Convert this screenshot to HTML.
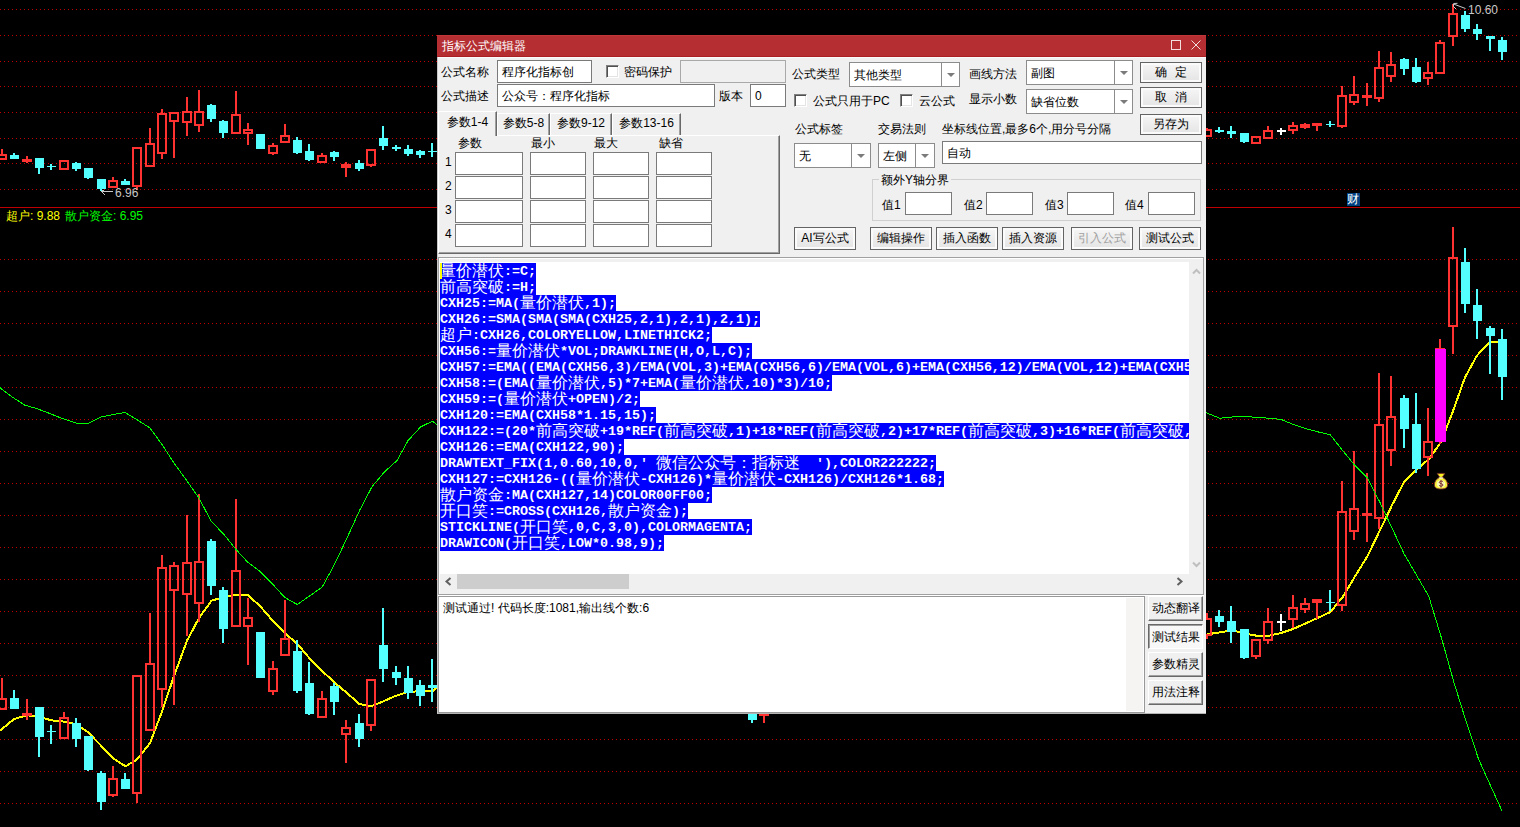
<!DOCTYPE html>
<html lang="zh"><head><meta charset="utf-8"><title>指标公式编辑器</title>
<style>
*{box-sizing:border-box;margin:0;padding:0}
html,body{width:1520px;height:827px;overflow:hidden;background:#000}
body{position:relative;font-family:"Liberation Sans",sans-serif;font-size:12px;line-height:12px;color:#000}
.a{position:absolute;white-space:nowrap}
.k{display:inline-block;width:12px;text-align:center}
#chart{position:absolute;left:0;top:0}
.ct{position:absolute;white-space:nowrap;font-size:12px;line-height:12px}
#dlg{position:absolute;left:437px;top:35px;width:769px;height:679px;background:#f0f0f0;border-left:1px solid #c8c8c8;border-bottom:1px solid #b4b4b4}
#ttl{position:absolute;left:437px;top:35px;width:769px;height:22px;background:#b42e32;border-top:1px solid #c1363a;border-bottom:1px solid #a92024}
.in{position:absolute;background:#fff;border:1px solid #7a7a7a;height:23px;padding:5px 0 0 4px;white-space:nowrap;overflow:hidden}
.dis{background:#f0f0f0;border-color:#a9a9a9}
.cb{position:absolute;width:13px;height:13px;background:#fff;border:1px solid #fff;border-top-color:#808080;border-left-color:#808080;box-shadow:inset 1px 1px 0 #505050,inset -1px -1px 0 #e4e4e4}
.cmb{position:absolute;background:#fff;border:1px solid #8c8c8c;height:25px;padding:6px 0 0 4px;white-space:nowrap;overflow:hidden}
.cmb i{position:absolute;right:0;top:0;bottom:0;width:18px;border-left:1px solid #8c8c8c;background:#fff}
.cmb i:after{content:"";position:absolute;left:5px;top:10px;border:4px solid transparent;border-top:4px solid #7b7b7b;border-bottom:0}
.btn{position:absolute;border:1px solid #646464;background:linear-gradient(#f6f6f6,#e4e4e4);box-shadow:inset 0 0 0 2px #fbfbfb;text-align:center;white-space:nowrap}
.btn.d{color:#a0a0a0}
.sb{position:absolute;border:1px solid #fff;border-right-color:#696969;border-bottom-color:#696969;box-shadow:inset -1px -1px 0 #a0a0a0;background:#f0f0f0;text-align:center;width:55px;height:25px;padding-top:5px;white-space:nowrap}
.sb.p{border-color:#696969 #fff #fff #696969;box-shadow:inset 1px 1px 0 #a0a0a0;background:#f8f8f8;padding-top:6px;padding-left:1px}
.tab{position:absolute;height:22px;border-top:1px solid #fff;border-left:1px solid #fff;border-right:1px solid #696969;box-shadow:inset -1px 0 0 #a0a0a0;background:#f0f0f0;text-align:center;padding-top:3px;white-space:nowrap}
#pane{position:absolute;left:438px;top:135px;width:342px;height:119px;border:1px solid #fff;border-right-color:#696969;border-bottom-color:#696969;box-shadow:inset -1px -1px 0 #a0a0a0}
#code{position:absolute;left:440px;top:263px;width:749px;height:311px;background:#fff;overflow:hidden;font-family:"Liberation Mono",monospace;font-weight:bold;font-size:13.33px;line-height:16px;color:#fff;white-space:pre}
#code div{height:16px;position:relative}
#code span.s{display:inline-block;background:#0000ff;height:16px;vertical-align:top;overflow:hidden}
#code span.t{display:inline-block;height:16px;vertical-align:top;overflow:hidden;position:relative;top:1px}
#code b{display:inline-block;width:16px;height:16px;overflow:hidden;vertical-align:top;text-align:center;font:normal 16px/16px "Liberation Sans",sans-serif}
</style></head>
<body>
<svg id="chart" width="1520" height="827" viewBox="0 0 1520 827" shape-rendering="crispEdges">
<rect width="1520" height="827" fill="#000"/>
<g stroke="#c00000" stroke-width="1" stroke-dasharray="1 3" fill="none"><path d="M0 9.5H1520"/><path d="M0 35.5H1520"/><path d="M0 61.5H1520"/><path d="M0 86.5H1520"/><path d="M0 112.5H1520"/><path d="M0 138.5H1520"/><path d="M0 163.5H1520"/><path d="M0 189.5H1520"/><path d="M0 259.5H1520"/><path d="M0 291.5H1520"/><path d="M0 323.5H1520"/><path d="M0 355.5H1520"/><path d="M0 387.5H1520"/><path d="M0 419.5H1520"/><path d="M0 451.5H1520"/><path d="M0 483.5H1520"/><path d="M0 515.5H1520"/><path d="M0 547.5H1520"/><path d="M0 579.5H1520"/><path d="M0 611.5H1520"/><path d="M0 643.5H1520"/><path d="M0 675.5H1520"/><path d="M0 707.5H1520"/><path d="M0 739.5H1520"/><path d="M0 771.5H1520"/><path d="M0 803.5H1520"/></g>
<rect x="0" y="207" width="1520" height="1" fill="#c00000"/>
<polyline fill="none" stroke="#ffff00" stroke-width="2" points="-10,738 2,729 14,719 27,715.3 39,716.6 51,720.3 64,721.6 76,724.1 88,732.2 101,745.6 113,758.3 125.5,766.3 137,759.5 150,743.1 162,711.5 174,676.1 187,640.7 199,618 211.5,600.75 223.5,597 236,594.5 248,595.25 260,606 273,621 285.4,633.7 297.5,644 310.5,659.5 322.5,671.3 335,683 347,693 359.2,703.9 371,706.2 383.2,701.4 395.8,695.8 408,691.8 420,691.3 432.2,691.3 444.5,682"/>
<polyline fill="none" stroke="#ffff00" stroke-width="2" points="1195,640 1207.4,634.3 1219.7,632.4 1232,630.2 1244.3,633.5 1256.6,635.7 1268.9,635.7 1281.2,633 1293.5,628.8 1305.8,623.3 1318.1,617.8 1330.4,612 1342.7,597 1355,576.4 1367.3,556.5 1379.6,531 1391.9,505.4 1404.2,481.7 1416.5,469.3 1428.8,459.3 1441.1,441.9 1453.3,410.3 1464.8,377.9 1477,355.5 1490.2,341.8 1502.6,341.8"/>
<rect x="1" y="149" width="2" height="5" fill="#ff3232"/><path fill="#ff3232" fill-rule="evenodd" d="M-3 154h10v6h-10zM-1 156h6v2h-6z"/>
<rect x="13" y="153" width="2" height="6" fill="#54ffff"/><rect x="10" y="155" width="9" height="4" fill="#54ffff"/>
<rect x="26" y="156" width="2" height="3" fill="#ff3232"/><rect x="26" y="162" width="2" height="1" fill="#ff3232"/><rect x="22" y="159" width="10" height="3" fill="#ff3232"/>
<rect x="38" y="158" width="2" height="16" fill="#54ffff"/><rect x="35" y="158" width="9" height="10" fill="#54ffff"/>
<rect x="50" y="164" width="2" height="6" fill="#54ffff"/><rect x="47" y="166" width="9" height="1" fill="#54ffff"/>
<path fill="#ff3232" fill-rule="evenodd" d="M59 160h10v10h-10zM61 162h6v6h-6z"/>
<rect x="75" y="162" width="2" height="9" fill="#54ffff"/><rect x="72" y="163" width="9" height="6" fill="#54ffff"/>
<rect x="87" y="168" width="2" height="11" fill="#54ffff"/><rect x="84" y="168" width="9" height="10" fill="#54ffff"/>
<rect x="100" y="179" width="2" height="12" fill="#54ffff"/><rect x="97" y="179" width="9" height="10" fill="#54ffff"/>
<rect x="112" y="177" width="2" height="3" fill="#ff3232"/><path fill="#ff3232" fill-rule="evenodd" d="M108 180h10v8h-10zM110 182h6v4h-6z"/>
<rect x="124" y="179" width="2" height="6" fill="#54ffff"/><rect x="121" y="181" width="9" height="4" fill="#54ffff"/>
<rect x="136" y="187" width="2" height="3" fill="#ff3232"/><path fill="#ff3232" fill-rule="evenodd" d="M132 147h10v40h-10zM134 149h6v36h-6z"/>
<rect x="149" y="128" width="2" height="15" fill="#ff3232"/><path fill="#ff3232" fill-rule="evenodd" d="M145 143h10v24h-10zM147 145h6v20h-6z"/>
<rect x="161" y="109" width="2" height="4" fill="#ff3232"/><rect x="161" y="154" width="2" height="5" fill="#ff3232"/><path fill="#ff3232" fill-rule="evenodd" d="M157 113h10v41h-10zM159 115h6v37h-6z"/>
<rect x="173" y="122" width="2" height="36" fill="#ff3232"/><path fill="#ff3232" fill-rule="evenodd" d="M169 112h10v10h-10zM171 114h6v6h-6z"/>
<rect x="186" y="97" width="2" height="14" fill="#ff3232"/><rect x="186" y="123" width="2" height="13" fill="#ff3232"/><path fill="#ff3232" fill-rule="evenodd" d="M182 111h10v12h-10zM184 113h6v8h-6z"/>
<rect x="198" y="90" width="2" height="21" fill="#ff3232"/><rect x="198" y="126" width="2" height="6" fill="#ff3232"/><path fill="#ff3232" fill-rule="evenodd" d="M194 111h10v15h-10zM196 113h6v11h-6z"/>
<rect x="210" y="104" width="2" height="18" fill="#54ffff"/><rect x="207" y="105" width="9" height="14" fill="#54ffff"/>
<rect x="222" y="120" width="2" height="18" fill="#54ffff"/><rect x="219" y="121" width="9" height="12" fill="#54ffff"/>
<rect x="235" y="91" width="2" height="23" fill="#ff3232"/><path fill="#ff3232" fill-rule="evenodd" d="M231 114h10v20h-10zM233 116h6v16h-6z"/>
<rect x="247" y="123" width="2" height="6" fill="#ff3232"/><rect x="247" y="134" width="2" height="11" fill="#ff3232"/><path fill="#ff3232" fill-rule="evenodd" d="M243 129h10v5h-10zM245 131h6v1h-6z"/>
<rect x="259" y="134" width="2" height="15" fill="#54ffff"/><rect x="256" y="134" width="9" height="15" fill="#54ffff"/>
<rect x="272" y="143" width="2" height="2" fill="#ff3232"/><rect x="272" y="154" width="2" height="1" fill="#ff3232"/><path fill="#ff3232" fill-rule="evenodd" d="M268 145h10v9h-10zM270 147h6v5h-6z"/>
<rect x="284" y="124" width="2" height="11" fill="#ff3232"/><path fill="#ff3232" fill-rule="evenodd" d="M280 135h10v8h-10zM282 137h6v4h-6z"/>
<rect x="296" y="137" width="2" height="17" fill="#54ffff"/><rect x="293" y="140" width="9" height="13" fill="#54ffff"/>
<rect x="308" y="144" width="2" height="17" fill="#54ffff"/><rect x="305" y="151" width="9" height="9" fill="#54ffff"/>
<rect x="321" y="153" width="2" height="2" fill="#ff3232"/><path fill="#ff3232" fill-rule="evenodd" d="M317 155h10v8h-10zM319 157h6v4h-6z"/>
<rect x="333" y="151" width="2" height="10" fill="#54ffff"/><rect x="330" y="152" width="9" height="5" fill="#54ffff"/>
<rect x="345" y="162" width="2" height="2" fill="#ff3232"/><rect x="345" y="168" width="2" height="9" fill="#ff3232"/><rect x="341" y="164" width="10" height="4" fill="#ff3232"/>
<rect x="358" y="160" width="2" height="11" fill="#54ffff"/><rect x="355" y="163" width="9" height="6" fill="#54ffff"/>
<rect x="370" y="166" width="2" height="1" fill="#ff3232"/><path fill="#ff3232" fill-rule="evenodd" d="M366 149h10v17h-10zM368 151h6v13h-6z"/>
<rect x="382" y="126" width="2" height="24" fill="#54ffff"/><rect x="379" y="138" width="9" height="8" fill="#54ffff"/>
<rect x="395" y="145" width="2" height="6" fill="#54ffff"/><rect x="392" y="147" width="9" height="2" fill="#54ffff"/>
<rect x="407" y="145" width="2" height="11" fill="#54ffff"/><rect x="404" y="149" width="9" height="5" fill="#54ffff"/>
<rect x="419" y="150" width="2" height="8" fill="#54ffff"/><rect x="416" y="151" width="9" height="4" fill="#54ffff"/>
<rect x="431" y="143" width="2" height="14" fill="#54ffff"/><rect x="428" y="151" width="9" height="1" fill="#54ffff"/>
<rect x="1206" y="128" width="2" height="1" fill="#ff3232"/><path fill="#ff3232" fill-rule="evenodd" d="M1202 129h10v8h-10zM1204 131h6v4h-6z"/>
<rect x="1218" y="127" width="2" height="6" fill="#54ffff"/><rect x="1215" y="130" width="9" height="2" fill="#54ffff"/>
<rect x="1230" y="126" width="2" height="12" fill="#54ffff"/><rect x="1227" y="131" width="9" height="3" fill="#54ffff"/>
<rect x="1243" y="133" width="2" height="10" fill="#54ffff"/><rect x="1240" y="133" width="9" height="9" fill="#54ffff"/>
<path fill="#ff3232" fill-rule="evenodd" d="M1251 136h10v8h-10zM1253 138h6v4h-6z"/>
<rect x="1267" y="126" width="2" height="4" fill="#ff3232"/><path fill="#ff3232" fill-rule="evenodd" d="M1263 130h10v9h-10zM1265 132h6v5h-6z"/>
<rect x="1280" y="128" width="2" height="7" fill="#ffffff"/><rect x="1277" y="130" width="9" height="2" fill="#ffffff"/>
<rect x="1292" y="122" width="2" height="3" fill="#ff3232"/><rect x="1292" y="131" width="2" height="3" fill="#ff3232"/><path fill="#ff3232" fill-rule="evenodd" d="M1288 125h10v6h-10zM1290 127h6v2h-6z"/>
<rect x="1304" y="123" width="2" height="1" fill="#ff3232"/><rect x="1304" y="128" width="2" height="1" fill="#ff3232"/><rect x="1300" y="124" width="10" height="4" fill="#ff3232"/>
<rect x="1316" y="126" width="2" height="5" fill="#ff3232"/><rect x="1312" y="123" width="10" height="3" fill="#ff3232"/>
<rect x="1329" y="121" width="2" height="6" fill="#54ffff"/><rect x="1326" y="124" width="9" height="1" fill="#54ffff"/>
<rect x="1341" y="86" width="2" height="9" fill="#ff3232"/><rect x="1341" y="127" width="2" height="1" fill="#ff3232"/><path fill="#ff3232" fill-rule="evenodd" d="M1337 95h10v32h-10zM1339 97h6v28h-6z"/>
<rect x="1353" y="76" width="2" height="18" fill="#ff3232"/><rect x="1353" y="103" width="2" height="2" fill="#ff3232"/><path fill="#ff3232" fill-rule="evenodd" d="M1349 94h10v9h-10zM1351 96h6v5h-6z"/>
<rect x="1366" y="83" width="2" height="12" fill="#ff3232"/><rect x="1366" y="98" width="2" height="8" fill="#ff3232"/><rect x="1362" y="95" width="10" height="3" fill="#ff3232"/>
<rect x="1378" y="51" width="2" height="16" fill="#ff3232"/><rect x="1378" y="99" width="2" height="3" fill="#ff3232"/><path fill="#ff3232" fill-rule="evenodd" d="M1374 67h10v32h-10zM1376 69h6v28h-6z"/>
<rect x="1390" y="52" width="2" height="12" fill="#ff3232"/><rect x="1390" y="77" width="2" height="5" fill="#ff3232"/><path fill="#ff3232" fill-rule="evenodd" d="M1386 64h10v13h-10zM1388 66h6v9h-6z"/>
<rect x="1403" y="58" width="2" height="17" fill="#54ffff"/><rect x="1400" y="59" width="9" height="10" fill="#54ffff"/>
<rect x="1415" y="58" width="2" height="25" fill="#54ffff"/><rect x="1412" y="67" width="9" height="15" fill="#54ffff"/>
<rect x="1427" y="62" width="2" height="10" fill="#ff3232"/><rect x="1427" y="79" width="2" height="6" fill="#ff3232"/><path fill="#ff3232" fill-rule="evenodd" d="M1423 72h10v7h-10zM1425 74h6v3h-6z"/>
<rect x="1439" y="40" width="2" height="2" fill="#ff3232"/><path fill="#ff3232" fill-rule="evenodd" d="M1435 42h10v32h-10zM1437 44h6v28h-6z"/>
<rect x="1452" y="4" width="2" height="9" fill="#ff3232"/><rect x="1452" y="37" width="2" height="9" fill="#ff3232"/><path fill="#ff3232" fill-rule="evenodd" d="M1448 13h10v24h-10zM1450 15h6v20h-6z"/>
<rect x="1464" y="11" width="2" height="21" fill="#54ffff"/><rect x="1461" y="15" width="9" height="14" fill="#54ffff"/>
<rect x="1476" y="24" width="2" height="16" fill="#54ffff"/><rect x="1473" y="29" width="9" height="5" fill="#54ffff"/>
<rect x="1489" y="36" width="2" height="15" fill="#54ffff"/><rect x="1486" y="36" width="9" height="3" fill="#54ffff"/>
<rect x="1501" y="37" width="2" height="23" fill="#54ffff"/><rect x="1498" y="40" width="9" height="12" fill="#54ffff"/>
<rect x="1" y="678" width="2" height="20" fill="#ff3232"/><path fill="#ff3232" fill-rule="evenodd" d="M-3 698h10v12h-10zM-1 700h6v8h-6z"/>
<rect x="13" y="690" width="2" height="19" fill="#54ffff"/><rect x="10" y="698" width="9" height="11" fill="#54ffff"/>
<rect x="26" y="699" width="2" height="14" fill="#ff3232"/><rect x="26" y="716" width="2" height="4" fill="#ff3232"/><rect x="22" y="713" width="10" height="3" fill="#ff3232"/>
<rect x="38" y="707" width="2" height="50" fill="#54ffff"/><rect x="35" y="707" width="9" height="30" fill="#54ffff"/>
<rect x="50" y="725" width="2" height="19" fill="#54ffff"/><rect x="47" y="731" width="9" height="1" fill="#54ffff"/>
<rect x="63" y="712" width="2" height="5" fill="#ff3232"/><path fill="#ff3232" fill-rule="evenodd" d="M59 717h10v22h-10zM61 719h6v18h-6z"/>
<rect x="75" y="718" width="2" height="29" fill="#54ffff"/><rect x="72" y="723" width="9" height="16" fill="#54ffff"/>
<rect x="87" y="736" width="2" height="35" fill="#54ffff"/><rect x="84" y="736" width="9" height="34" fill="#54ffff"/>
<rect x="100" y="771" width="2" height="39" fill="#54ffff"/><rect x="97" y="773" width="9" height="29" fill="#54ffff"/>
<rect x="112" y="766" width="2" height="12" fill="#ff3232"/><rect x="112" y="796" width="2" height="1" fill="#ff3232"/><path fill="#ff3232" fill-rule="evenodd" d="M108 778h10v18h-10zM110 780h6v14h-6z"/>
<rect x="124" y="773" width="2" height="16" fill="#54ffff"/><rect x="121" y="779" width="9" height="10" fill="#54ffff"/>
<rect x="136" y="794" width="2" height="9" fill="#ff3232"/><path fill="#ff3232" fill-rule="evenodd" d="M132 675h10v119h-10zM134 677h6v115h-6z"/>
<rect x="149" y="613" width="2" height="50" fill="#ff3232"/><path fill="#ff3232" fill-rule="evenodd" d="M145 663h10v68h-10zM147 665h6v64h-6z"/>
<rect x="161" y="555" width="2" height="12" fill="#ff3232"/><rect x="161" y="690" width="2" height="17" fill="#ff3232"/><path fill="#ff3232" fill-rule="evenodd" d="M157 567h10v123h-10zM159 569h6v119h-6z"/>
<rect x="173" y="562" width="2" height="3" fill="#ff3232"/><rect x="173" y="591" width="2" height="114" fill="#ff3232"/><path fill="#ff3232" fill-rule="evenodd" d="M169 565h10v26h-10zM171 567h6v22h-6z"/>
<rect x="186" y="515" width="2" height="47" fill="#ff3232"/><rect x="186" y="595" width="2" height="41" fill="#ff3232"/><path fill="#ff3232" fill-rule="evenodd" d="M182 562h10v33h-10zM184 564h6v29h-6z"/>
<rect x="198" y="494" width="2" height="67" fill="#ff3232"/><rect x="198" y="604" width="2" height="18" fill="#ff3232"/><path fill="#ff3232" fill-rule="evenodd" d="M194 561h10v43h-10zM196 563h6v39h-6z"/>
<rect x="210" y="539" width="2" height="56" fill="#54ffff"/><rect x="207" y="541" width="9" height="45" fill="#54ffff"/>
<rect x="222" y="587" width="2" height="56" fill="#54ffff"/><rect x="219" y="590" width="9" height="39" fill="#54ffff"/>
<rect x="235" y="499" width="2" height="71" fill="#ff3232"/><path fill="#ff3232" fill-rule="evenodd" d="M231 570h10v57h-10zM233 572h6v53h-6z"/>
<rect x="247" y="598" width="2" height="19" fill="#ff3232"/><rect x="247" y="627" width="2" height="38" fill="#ff3232"/><path fill="#ff3232" fill-rule="evenodd" d="M243 617h10v10h-10zM245 619h6v6h-6z"/>
<rect x="259" y="632" width="2" height="46" fill="#54ffff"/><rect x="256" y="632" width="9" height="46" fill="#54ffff"/>
<rect x="272" y="661" width="2" height="7" fill="#ff3232"/><rect x="272" y="692" width="2" height="3" fill="#ff3232"/><path fill="#ff3232" fill-rule="evenodd" d="M268 668h10v24h-10zM270 670h6v20h-6z"/>
<rect x="284" y="600" width="2" height="38" fill="#ff3232"/><path fill="#ff3232" fill-rule="evenodd" d="M280 638h10v18h-10zM282 640h6v14h-6z"/>
<rect x="296" y="640" width="2" height="53" fill="#54ffff"/><rect x="293" y="651" width="9" height="40" fill="#54ffff"/>
<rect x="308" y="662" width="2" height="53" fill="#54ffff"/><rect x="305" y="683" width="9" height="31" fill="#54ffff"/>
<rect x="321" y="691" width="2" height="7" fill="#ff3232"/><path fill="#ff3232" fill-rule="evenodd" d="M317 698h10v20h-10zM319 700h6v16h-6z"/>
<rect x="333" y="683" width="2" height="32" fill="#54ffff"/><rect x="330" y="686" width="9" height="16" fill="#54ffff"/>
<rect x="345" y="720" width="2" height="7" fill="#ff3232"/><rect x="345" y="735" width="2" height="28" fill="#ff3232"/><path fill="#ff3232" fill-rule="evenodd" d="M341 727h10v8h-10zM343 729h6v4h-6z"/>
<rect x="358" y="714" width="2" height="33" fill="#54ffff"/><rect x="355" y="723" width="9" height="16" fill="#54ffff"/>
<rect x="370" y="726" width="2" height="5" fill="#ff3232"/><path fill="#ff3232" fill-rule="evenodd" d="M366 679h10v47h-10zM368 681h6v43h-6z"/>
<rect x="382" y="608" width="2" height="74" fill="#54ffff"/><rect x="379" y="645" width="9" height="24" fill="#54ffff"/>
<rect x="395" y="666" width="2" height="19" fill="#54ffff"/><rect x="392" y="672" width="9" height="6" fill="#54ffff"/>
<rect x="407" y="666" width="2" height="33" fill="#54ffff"/><rect x="404" y="678" width="9" height="15" fill="#54ffff"/>
<rect x="419" y="680" width="2" height="26" fill="#54ffff"/><rect x="416" y="685" width="9" height="11" fill="#54ffff"/>
<rect x="431" y="659" width="2" height="43" fill="#54ffff"/><rect x="428" y="685" width="9" height="3" fill="#54ffff"/>
<rect x="751" y="690" width="2" height="33" fill="#54ffff"/><rect x="748" y="690" width="9" height="30" fill="#54ffff"/>
<rect x="763" y="716" width="2" height="7" fill="#ff3232"/><rect x="759" y="712" width="10" height="4" fill="#ff3232"/>
<rect x="1206" y="613" width="2" height="5" fill="#ff3232"/><rect x="1206" y="636" width="2" height="3" fill="#ff3232"/><path fill="#ff3232" fill-rule="evenodd" d="M1202 618h10v18h-10zM1204 620h6v14h-6z"/>
<rect x="1218" y="610" width="2" height="17" fill="#54ffff"/><rect x="1215" y="616" width="9" height="6" fill="#54ffff"/>
<rect x="1230" y="606" width="2" height="37" fill="#54ffff"/><rect x="1227" y="621" width="9" height="11" fill="#54ffff"/>
<rect x="1243" y="629" width="2" height="30" fill="#54ffff"/><rect x="1240" y="629" width="9" height="29" fill="#54ffff"/>
<rect x="1255" y="657" width="2" height="2" fill="#ff3232"/><path fill="#ff3232" fill-rule="evenodd" d="M1251 639h10v18h-10zM1253 641h6v14h-6z"/>
<rect x="1267" y="608" width="2" height="13" fill="#ff3232"/><rect x="1267" y="641" width="2" height="3" fill="#ff3232"/><path fill="#ff3232" fill-rule="evenodd" d="M1263 621h10v20h-10zM1265 623h6v16h-6z"/>
<rect x="1280" y="614" width="2" height="17" fill="#ffffff"/><rect x="1277" y="621" width="9" height="2" fill="#ffffff"/>
<rect x="1292" y="595" width="2" height="12" fill="#ff3232"/><rect x="1292" y="620" width="2" height="8" fill="#ff3232"/><path fill="#ff3232" fill-rule="evenodd" d="M1288 607h10v13h-10zM1290 609h6v9h-6z"/>
<rect x="1304" y="598" width="2" height="5" fill="#ff3232"/><rect x="1304" y="610" width="2" height="3" fill="#ff3232"/><path fill="#ff3232" fill-rule="evenodd" d="M1300 603h10v7h-10zM1302 605h6v3h-6z"/>
<rect x="1316" y="603" width="2" height="16" fill="#ff3232"/><rect x="1312" y="599" width="10" height="4" fill="#ff3232"/>
<rect x="1329" y="590" width="2" height="21" fill="#54ffff"/><rect x="1326" y="602" width="9" height="1" fill="#54ffff"/>
<rect x="1341" y="481" width="2" height="30" fill="#ff3232"/><rect x="1341" y="606" width="2" height="5" fill="#ff3232"/><path fill="#ff3232" fill-rule="evenodd" d="M1337 511h10v95h-10zM1339 513h6v91h-6z"/>
<rect x="1353" y="451" width="2" height="57" fill="#ff3232"/><rect x="1353" y="532" width="2" height="8" fill="#ff3232"/><path fill="#ff3232" fill-rule="evenodd" d="M1349 508h10v24h-10zM1351 510h6v20h-6z"/>
<rect x="1366" y="473" width="2" height="40" fill="#ff3232"/><rect x="1366" y="516" width="2" height="26" fill="#ff3232"/><rect x="1362" y="513" width="10" height="3" fill="#ff3232"/>
<rect x="1378" y="373" width="2" height="51" fill="#ff3232"/><rect x="1378" y="519" width="2" height="10" fill="#ff3232"/><path fill="#ff3232" fill-rule="evenodd" d="M1374 424h10v95h-10zM1376 426h6v91h-6z"/>
<rect x="1390" y="376" width="2" height="40" fill="#ff3232"/><rect x="1390" y="451" width="2" height="15" fill="#ff3232"/><path fill="#ff3232" fill-rule="evenodd" d="M1386 416h10v35h-10zM1388 418h6v31h-6z"/>
<rect x="1403" y="395" width="2" height="53" fill="#54ffff"/><rect x="1400" y="398" width="9" height="31" fill="#54ffff"/>
<rect x="1415" y="393" width="2" height="80" fill="#54ffff"/><rect x="1412" y="424" width="9" height="45" fill="#54ffff"/>
<rect x="1427" y="408" width="2" height="33" fill="#ff3232"/><rect x="1427" y="458" width="2" height="18" fill="#ff3232"/><path fill="#ff3232" fill-rule="evenodd" d="M1423 441h10v17h-10zM1425 443h6v13h-6z"/>
<rect x="1439" y="339" width="2" height="9" fill="#ff3232"/><rect x="1439" y="442" width="2" height="2" fill="#ff3232"/><path fill="#ff3232" fill-rule="evenodd" d="M1435 348h10v94h-10zM1437 350h6v90h-6z"/>
<rect x="1452" y="227" width="2" height="30" fill="#ff3232"/><rect x="1452" y="327" width="2" height="27" fill="#ff3232"/><path fill="#ff3232" fill-rule="evenodd" d="M1448 257h10v70h-10zM1450 259h6v66h-6z"/>
<rect x="1464" y="248" width="2" height="65" fill="#54ffff"/><rect x="1461" y="262" width="9" height="42" fill="#54ffff"/>
<rect x="1476" y="289" width="2" height="50" fill="#54ffff"/><rect x="1473" y="305" width="9" height="16" fill="#54ffff"/>
<rect x="1489" y="326" width="2" height="48" fill="#54ffff"/><rect x="1486" y="328" width="9" height="8" fill="#54ffff"/>
<rect x="1501" y="329" width="2" height="71" fill="#54ffff"/><rect x="1498" y="339" width="9" height="38" fill="#54ffff"/>
<polyline fill="none" stroke="#00ff00" stroke-width="1" points="-10,380 0,387.75 12.5,397.25 25,405.25 35,408 46,412 61,418 76,423 89,423 101,417 113,414.5 125,412.5 137.5,420 150,428 162,444.5 174,463 187,481 199,498 211,521 224,534.5 236,549.5 247.5,562 260,571.4 272.4,583.9 284.9,597.6 297.3,604.5 309.8,595.8 322.2,587.1 334.7,564 347.1,537.8 359.6,510.4 372,486.7 384.5,471.8 397,460.6 408,440.6 420.6,427 432.3,421.2 444.5,430"/>
<polyline fill="none" stroke="#00ff00" stroke-width="1" points="1195,408 1206,412.7 1219.7,418.2 1232,417 1244.3,416.2 1256.6,417.5 1268.9,418.2 1281.2,419.5 1293.5,424.5 1305.8,428.7 1318.1,431.9 1330.4,434.9 1342.7,450.6 1355,465.6 1367.3,478 1379.6,501.7 1391.9,527.8 1404.2,554 1416.5,575.2 1428.8,596.3 1441.6,638.4 1453.9,682.3 1466.3,722.1 1478.6,759.2 1491,786.7 1502,810.8"/>
<rect x="1435" y="349" width="11" height="93" fill="#ff00ff"/>
</svg>
<div class="ct" style="left:6px;top:210px;color:#ffff00"><span class="k">超</span><span class="k">户</span>: 9.88</div>
<div class="ct" style="left:65px;top:210px;color:#00ff00"><span class="k">散</span><span class="k">户</span><span class="k">资</span><span class="k">金</span>: 6.95</div>
<div class="ct" style="left:115px;top:187px;color:#c8c8c8">6.96</div>
<div class="ct" style="left:1468px;top:4px;color:#c8c8c8">10.60</div>
<div class="ct" style="left:1347px;top:193px;width:13px;height:13px;background:#004080;color:#fff;padding-left:0;line-height:13px;overflow:hidden"><span class="k">财</span></div>
<svg class="a" style="left:101px;top:187px" width="14" height="10" viewBox="0 0 14 10" shape-rendering="crispEdges"><path d="M0.5 4.5H12M0.5 4.5L3.5 2.5M0.5 4.5L4.5 8.5" stroke="#c8c8c8" stroke-width="1" fill="none"/></svg>
<svg class="a" style="left:1452px;top:0px" width="16" height="12" viewBox="0 0 16 12"><path d="M1.5 4L13.5 8.5M1.5 3.5L5.5 3.3M1.5 4V6.5L4 9" stroke="#c8c8c8" stroke-width="1" fill="none"/></svg>
<svg class="a" style="left:1433px;top:472px" width="16" height="18" viewBox="0 0 16 18"><path d="M4.2 1.400h7.600l-2.600 4h-2.400z" fill="#f4f020" stroke="#7a2a2a" stroke-width=".8"/><path d="M6.300 5.600C3.500 6.800 1.300 9.800 1.400 13c.2 3.500 3.600 4 6.600 4s6.400-.5 6.600-4c.1-3.200-2.100-6.200-4.900-7.400z" fill="#f6f23a" stroke="#7a2a2a" stroke-width=".9"/><ellipse cx="8" cy="11.800" rx="4.200" ry="3.600" fill="#fbf9b4"/><ellipse cx="8" cy="6" rx="2.300" ry=".8" fill="#fffde8"/><path d="M10.200 10c-.4-1.200-3.800-1.300-3.900.3-.1 1.700 3.700 1 3.700 2.700 0 1.600-3.400 1.500-3.900.2M8 8.200v7.400" stroke="#7a2a2a" stroke-width="1" fill="none"/></svg>
<div id="dlg"></div><div id="ttl"></div><div class="a" style="left:438px;top:57px;width:768px;height:1px;background:#fafafa"></div>
<div class="a" style="left:442px;top:40px;color:#fff"><span class="k">指</span><span class="k">标</span><span class="k">公</span><span class="k">式</span><span class="k">编</span><span class="k">辑</span><span class="k">器</span></div>
<div class="a" style="left:1171px;top:40px;width:10px;height:10px;border:1px solid #f3dede"></div>
<svg class="a" style="left:1190px;top:39px" width="12" height="12" viewBox="0 0 12 12"><path d="M1.5 1.5L10.5 10.5M10.5 1.5L1.5 10.5" stroke="#f3dede" stroke-width="1" fill="none"/></svg>
<div class="a" style="left:441px;top:66px;"><span class="k">公</span><span class="k">式</span><span class="k">名</span><span class="k">称</span></div>
<div class="in" style="left:497px;top:60px;width:95px;height:23px"><span class="k">程</span><span class="k">序</span><span class="k">化</span><span class="k">指</span><span class="k">标</span><span class="k">创</span></div>
<div class="cb" style="left:606px;top:65px"></div>
<div class="a" style="left:624px;top:66px;"><span class="k">密</span><span class="k">码</span><span class="k">保</span><span class="k">护</span></div>
<div class="in dis" style="left:680px;top:60px;width:106px;height:23px"></div>
<div class="a" style="left:441px;top:90px;"><span class="k">公</span><span class="k">式</span><span class="k">描</span><span class="k">述</span></div>
<div class="in" style="left:497px;top:84px;width:218px;height:23px"><span class="k">公</span><span class="k">众</span><span class="k">号</span><span class="k">：</span><span class="k">程</span><span class="k">序</span><span class="k">化</span><span class="k">指</span><span class="k">标</span></div>
<div class="a" style="left:719px;top:90px;"><span class="k">版</span><span class="k">本</span></div>
<div class="in" style="left:750px;top:84px;width:36px;height:23px">0</div>
<div class="a" style="left:792px;top:68px;"><span class="k">公</span><span class="k">式</span><span class="k">类</span><span class="k">型</span></div>
<div class="cmb" style="left:849px;top:62px;width:111px"><span class="k">其</span><span class="k">他</span><span class="k">类</span><span class="k">型</span><i style="width:18px"></i></div>
<div class="a" style="left:969px;top:68px;"><span class="k">画</span><span class="k">线</span><span class="k">方</span><span class="k">法</span></div>
<div class="cmb" style="left:1026px;top:60px;width:107px"><span class="k">副</span><span class="k">图</span><i style="width:18px"></i></div>
<div class="a" style="left:969px;top:93px;"><span class="k">显</span><span class="k">示</span><span class="k">小</span><span class="k">数</span></div>
<div class="cmb" style="left:1026px;top:89px;width:107px"><span class="k">缺</span><span class="k">省</span><span class="k">位</span><span class="k">数</span><i style="width:18px"></i></div>
<div class="btn" style="left:1140px;top:62px;width:62px;height:21px;padding-top:3px"><span class="k">确</span><span style="display:inline-block;width:8px;white-space:pre"> </span><span class="k">定</span></div>
<div class="btn" style="left:1140px;top:87px;width:62px;height:21px;padding-top:3px"><span class="k">取</span><span style="display:inline-block;width:8px;white-space:pre"> </span><span class="k">消</span></div>
<div class="btn" style="left:1140px;top:114px;width:62px;height:21px;padding-top:3px"><span class="k">另</span><span class="k">存</span><span class="k">为</span></div>
<div class="cb" style="left:794px;top:94px"></div>
<div class="a" style="left:813px;top:95px;"><span class="k">公</span><span class="k">式</span><span class="k">只</span><span class="k">用</span><span class="k">于</span>PC</div>
<div class="cb" style="left:900px;top:94px"></div>
<div class="a" style="left:919px;top:95px;"><span class="k">云</span><span class="k">公</span><span class="k">式</span></div>
<div class="a" style="left:795px;top:123px;"><span class="k">公</span><span class="k">式</span><span class="k">标</span><span class="k">签</span></div>
<div class="a" style="left:878px;top:123px;"><span class="k">交</span><span class="k">易</span><span class="k">法</span><span class="k">则</span></div>
<div class="a" style="left:942px;top:123px;"><span class="k">坐</span><span class="k">标</span><span class="k">线</span><span class="k">位</span><span class="k">置</span>,<span class="k">最</span><span class="k">多</span>6<span class="k">个</span>,<span class="k">用</span><span class="k">分</span><span class="k">号</span><span class="k">分</span><span class="k">隔</span></div>
<div class="cmb" style="left:794px;top:143px;width:77px"><span class="k">无</span><i style="width:19px"></i></div>
<div class="cmb" style="left:878px;top:143px;width:57px"><span class="k">左</span><span class="k">侧</span><i style="width:19px"></i></div>
<div class="in" style="left:942px;top:141px;width:260px;height:23px"><span class="k">自</span><span class="k">动</span></div>
<div class="a" style="left:872px;top:179px;width:329px;height:42px;border:1px solid #d0d0d0"></div>
<div class="a" style="left:879px;top:174px;background:#f0f0f0;padding:0 2px"><span class="k">额</span><span class="k">外</span>Y<span class="k">轴</span><span class="k">分</span><span class="k">界</span></div>
<div class="a" style="left:882px;top:199px;"><span class="k">值</span>1</div>
<div class="in" style="left:905px;top:192px;width:47px;height:23px"></div>
<div class="a" style="left:964px;top:199px;"><span class="k">值</span>2</div>
<div class="in" style="left:986px;top:192px;width:47px;height:23px"></div>
<div class="a" style="left:1045px;top:199px;"><span class="k">值</span>3</div>
<div class="in" style="left:1067px;top:192px;width:47px;height:23px"></div>
<div class="a" style="left:1125px;top:199px;"><span class="k">值</span>4</div>
<div class="in" style="left:1148px;top:192px;width:47px;height:23px"></div>
<div class="btn" style="left:794px;top:227px;width:62px;height:23px;padding-top:4px">AI<span class="k">写</span><span class="k">公</span><span class="k">式</span></div>
<div class="btn" style="left:870px;top:227px;width:62px;height:23px;padding-top:4px"><span class="k">编</span><span class="k">辑</span><span class="k">操</span><span class="k">作</span></div>
<div class="btn" style="left:936px;top:227px;width:62px;height:23px;padding-top:4px"><span class="k">插</span><span class="k">入</span><span class="k">函</span><span class="k">数</span></div>
<div class="btn" style="left:1002px;top:227px;width:62px;height:23px;padding-top:4px"><span class="k">插</span><span class="k">入</span><span class="k">资</span><span class="k">源</span></div>
<div class="btn d" style="left:1071px;top:227px;width:62px;height:23px;padding-top:4px"><span class="k">引</span><span class="k">入</span><span class="k">公</span><span class="k">式</span></div>
<div class="btn" style="left:1139px;top:227px;width:62px;height:23px;padding-top:4px"><span class="k">测</span><span class="k">试</span><span class="k">公</span><span class="k">式</span></div>
<div id="pane"></div>
<div class="tab" style="left:438px;top:111px;width:59px;height:25px;padding-top:4px;z-index:2"><span class="k">参</span><span class="k">数</span>1-4</div>
<div class="tab" style="left:497px;top:113px;width:53px"><span class="k">参</span><span class="k">数</span>5-8</div>
<div class="tab" style="left:550px;top:113px;width:62px"><span class="k">参</span><span class="k">数</span>9-12</div>
<div class="tab" style="left:612px;top:113px;width:69px"><span class="k">参</span><span class="k">数</span>13-16</div>
<div class="a" style="left:458px;top:137px;"><span class="k">参</span><span class="k">数</span></div>
<div class="a" style="left:531px;top:137px;"><span class="k">最</span><span class="k">小</span></div>
<div class="a" style="left:594px;top:137px;"><span class="k">最</span><span class="k">大</span></div>
<div class="a" style="left:659px;top:137px;"><span class="k">缺</span><span class="k">省</span></div>
<div class="a" style="left:445px;top:156px;">1</div>
<div class="in" style="left:455px;top:152px;width:68px;height:23px"></div>
<div class="in" style="left:530px;top:152px;width:56px;height:23px"></div>
<div class="in" style="left:593px;top:152px;width:56px;height:23px"></div>
<div class="in" style="left:656px;top:152px;width:56px;height:23px"></div>
<div class="a" style="left:445px;top:180px;">2</div>
<div class="in" style="left:455px;top:176px;width:68px;height:23px"></div>
<div class="in" style="left:530px;top:176px;width:56px;height:23px"></div>
<div class="in" style="left:593px;top:176px;width:56px;height:23px"></div>
<div class="in" style="left:656px;top:176px;width:56px;height:23px"></div>
<div class="a" style="left:445px;top:204px;">3</div>
<div class="in" style="left:455px;top:200px;width:68px;height:23px"></div>
<div class="in" style="left:530px;top:200px;width:56px;height:23px"></div>
<div class="in" style="left:593px;top:200px;width:56px;height:23px"></div>
<div class="in" style="left:656px;top:200px;width:56px;height:23px"></div>
<div class="a" style="left:445px;top:228px;">4</div>
<div class="in" style="left:455px;top:224px;width:68px;height:23px"></div>
<div class="in" style="left:530px;top:224px;width:56px;height:23px"></div>
<div class="in" style="left:593px;top:224px;width:56px;height:23px"></div>
<div class="in" style="left:656px;top:224px;width:56px;height:23px"></div>
<div class="a" style="left:438px;top:257px;width:766px;height:338px;border:1px solid #a0a0a0;background:#f0f0f0"></div>
<div class="a" style="left:439px;top:258px;width:764px;height:1px;background:#fff"></div>
<div class="a" style="left:439px;top:258px;width:1px;height:336px;background:#fff"></div>
<div class="a" style="left:440px;top:262px;width:749px;height:312px;background:#fff"></div>
<svg class="a" style="left:1192px;top:268px" width="9" height="7" viewBox="0 0 9 7"><path d="M1 5.5L4.5 2L8 5.5" stroke="#bfbfbf" stroke-width="2" fill="none"/></svg>
<svg class="a" style="left:1192px;top:561px" width="9" height="7" viewBox="0 0 9 7"><path d="M1 1.5L4.5 5L8 1.5" stroke="#bfbfbf" stroke-width="2" fill="none"/></svg>
<div class="a" style="left:457px;top:574px;width:172px;height:15px;background:#cdcdcd"></div>
<svg class="a" style="left:444px;top:577px" width="8" height="9" viewBox="0 0 8 9"><path d="M6.5 1L2.5 4.5L6.5 8" stroke="#606060" stroke-width="2" fill="none"/></svg>
<svg class="a" style="left:1176px;top:577px" width="8" height="9" viewBox="0 0 8 9"><path d="M1.5 1L5.5 4.5L1.5 8" stroke="#606060" stroke-width="2" fill="none"/></svg>
<div id="code"><div><span class="s" style="width:96px"><b>量</b><b>价</b><b>潜</b><b>伏</b><span class="t" style="width:32px">:=C;</span></span></div><div><span class="s" style="width:96px"><b>前</b><b>高</b><b>突</b><b>破</b><span class="t" style="width:32px">:=H;</span></span></div><div><span class="s" style="width:176px"><span class="t" style="width:80px">CXH25:=MA(</span><b>量</b><b>价</b><b>潜</b><b>伏</b><span class="t" style="width:32px">,1);</span></span></div><div><span class="s" style="width:320px"><span class="t" style="width:320px">CXH26:=SMA(SMA(SMA(CXH25,2,1),2,1),2,1);</span></span></div><div><span class="s" style="width:272px"><b>超</b><b>户</b><span class="t" style="width:240px">:CXH26,COLORYELLOW,LINETHICK2;</span></span></div><div><span class="s" style="width:312px"><span class="t" style="width:56px">CXH56:=</span><b>量</b><b>价</b><b>潜</b><b>伏</b><span class="t" style="width:192px">*VOL;DRAWKLINE(H,O,L,C);</span></span></div><div><span class="s" style="width:752px"><span class="t" style="width:752px">CXH57:=EMA((EMA(CXH56,3)/EMA(VOL,3)+EMA(CXH56,6)/EMA(VOL,6)+EMA(CXH56,12)/EMA(VOL,12)+EMA(CXH5</span></span></div><div><span class="s" style="width:392px"><span class="t" style="width:96px">CXH58:=(EMA(</span><b>量</b><b>价</b><b>潜</b><b>伏</b><span class="t" style="width:80px">,5)*7+EMA(</span><b>量</b><b>价</b><b>潜</b><b>伏</b><span class="t" style="width:88px">,10)*3)/10;</span></span></div><div><span class="s" style="width:200px"><span class="t" style="width:64px">CXH59:=(</span><b>量</b><b>价</b><b>潜</b><b>伏</b><span class="t" style="width:72px">+OPEN)/2;</span></span></div><div><span class="s" style="width:216px"><span class="t" style="width:216px">CXH120:=EMA(CXH58*1.15,15);</span></span></div><div><span class="s" style="width:752px"><span class="t" style="width:96px">CXH122:=(20*</span><b>前</b><b>高</b><b>突</b><b>破</b><span class="t" style="width:64px">+19*REF(</span><b>前</b><b>高</b><b>突</b><b>破</b><span class="t" style="width:88px">,1)+18*REF(</span><b>前</b><b>高</b><b>突</b><b>破</b><span class="t" style="width:88px">,2)+17*REF(</span><b>前</b><b>高</b><b>突</b><b>破</b><span class="t" style="width:88px">,3)+16*REF(</span><b>前</b><b>高</b><b>突</b><b>破</b><span class="t" style="width:8px">,</span></span></div><div><span class="s" style="width:184px"><span class="t" style="width:184px">CXH126:=EMA(CXH122,90);</span></span></div><div><span class="s" style="width:496px"><span class="t" style="width:216px">DRAWTEXT_FIX(1,0.60,10,0,' </span><b>微</b><b>信</b><b>公</b><b>众</b><b>号</b><b>：</b><b>指</b><b>标</b><b>迷</b><span class="t" style="width:136px">  '),COLOR222222;</span></span></div><div><span class="s" style="width:504px"><span class="t" style="width:136px">CXH127:=CXH126-((</span><b>量</b><b>价</b><b>潜</b><b>伏</b><span class="t" style="width:72px">-CXH126)*</span><b>量</b><b>价</b><b>潜</b><b>伏</b><span class="t" style="width:168px">-CXH126)/CXH126*1.68;</span></span></div><div><span class="s" style="width:272px"><b>散</b><b>户</b><b>资</b><b>金</b><span class="t" style="width:208px">:MA(CXH127,14)COLOR00FF00;</span></span></div><div><span class="s" style="width:248px"><b>开</b><b>口</b><b>笑</b><span class="t" style="width:120px">:=CROSS(CXH126,</span><b>散</b><b>户</b><b>资</b><b>金</b><span class="t" style="width:16px">);</span></span></div><div><span class="s" style="width:312px"><span class="t" style="width:80px">STICKLINE(</span><b>开</b><b>口</b><b>笑</b><span class="t" style="width:184px">,0,C,3,0),COLORMAGENTA;</span></span></div><div><span class="s" style="width:224px"><span class="t" style="width:72px">DRAWICON(</span><b>开</b><b>口</b><b>笑</b><span class="t" style="width:104px">,LOW*0.98,9);</span></span></div></div>
<div class="a" style="left:440px;top:263px;width:2px;height:16px;background:#ffff00"></div>
<div class="a" style="left:438px;top:595px;width:766px;height:1px;background:#fff"></div>
<div class="a" style="left:438px;top:596px;width:707px;height:117px;border:1px solid #989898;background:#fff"></div>
<div class="a" style="left:1126px;top:598px;width:17px;height:113px;background:#f5f4f2"></div>
<div class="a" style="left:443px;top:602px;"><span class="k">测</span><span class="k">试</span><span class="k">通</span><span class="k">过</span>! <span class="k">代</span><span class="k">码</span><span class="k">长</span><span class="k">度</span>:1081,<span class="k">输</span><span class="k">出</span><span class="k">线</span><span class="k">个</span><span class="k">数</span>:6</div>
<div class="sb" style="left:1148px;top:596px"><span class="k">动</span><span class="k">态</span><span class="k">翻</span><span class="k">译</span></div>
<div class="sb p" style="left:1148px;top:624px"><span class="k">测</span><span class="k">试</span><span class="k">结</span><span class="k">果</span></div>
<div class="sb" style="left:1148px;top:652px"><span class="k">参</span><span class="k">数</span><span class="k">精</span><span class="k">灵</span></div>
<div class="sb" style="left:1148px;top:680px"><span class="k">用</span><span class="k">法</span><span class="k">注</span><span class="k">释</span></div>
</body></html>
